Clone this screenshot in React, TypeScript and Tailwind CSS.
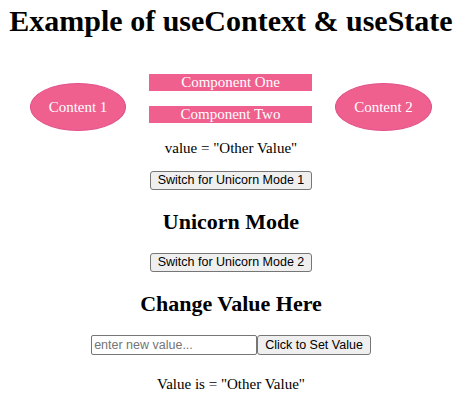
export default function App() {
  return (
    <div className="w-full text-center text-black font-['Liberation_Serif',serif]">
      <h1 className="pt-[4px] text-[30px] leading-[34px] font-bold">Example of useContext &amp; useState</h1>

      <div className="mt-[36px] flex justify-center items-start gap-[23px]">
        <div className="mt-[9px] w-[96px] h-[48px] rounded-[50%] bg-[#f0608f] border border-[#e2508a] flex items-center justify-center text-white text-[15px]">
          Content 1
        </div>
        <div className="w-[163px] flex flex-col gap-[15px]">
          <div className="h-[17px] leading-[17px] bg-[#f0608f] text-white text-[15px]">Component One</div>
          <div className="h-[17px] leading-[17px] bg-[#f0608f] text-white text-[15px]">Component Two</div>
        </div>
        <div className="mt-[9px] w-[97px] h-[48px] rounded-[50%] bg-[#f0608f] border border-[#e2508a] flex items-center justify-center text-white text-[15px]">
          Content 2
        </div>
      </div>

      <p className="mt-[9px] text-[15px] leading-[17px]">value = "Other Value"</p>

      <div className="mt-[14px] flex justify-center">
        <button className="h-[19px] px-[7px] bg-[#efefef] border border-[#767676] rounded-[3px] text-[12.5px] leading-none font-['Liberation_Sans',sans-serif]">
          Switch for Unicorn Mode 1
        </button>
      </div>

      <h2 className="mt-[19px] text-[22px] leading-[26px] font-bold">Unicorn Mode</h2>

      <div className="mt-[18px] flex justify-center">
        <button className="h-[19px] px-[7px] bg-[#efefef] border border-[#767676] rounded-[3px] text-[12.5px] leading-none font-['Liberation_Sans',sans-serif]">
          Switch for Unicorn Mode 2
        </button>
      </div>

      <h2 className="mt-[19px] text-[22px] leading-[26px] font-bold">Change Value Here</h2>

      <div className="mt-[18px] flex justify-center font-['Liberation_Sans',sans-serif]">
        <input
          type="text"
          placeholder="enter new value..."
          className="w-[166px] h-[20px] px-[2px] bg-white border border-[#767676] rounded-[2px] text-[12.5px] placeholder:text-[#757575]"
        />
        <button className="h-[20px] px-[7px] bg-[#efefef] border border-[#767676] rounded-[3px] text-[12.5px] leading-none">
          Click to Set Value
        </button>
      </div>

      <p className="mt-[21px] text-[15px] leading-[17px]">Value is = "Other Value"</p>
    </div>
  );
}
